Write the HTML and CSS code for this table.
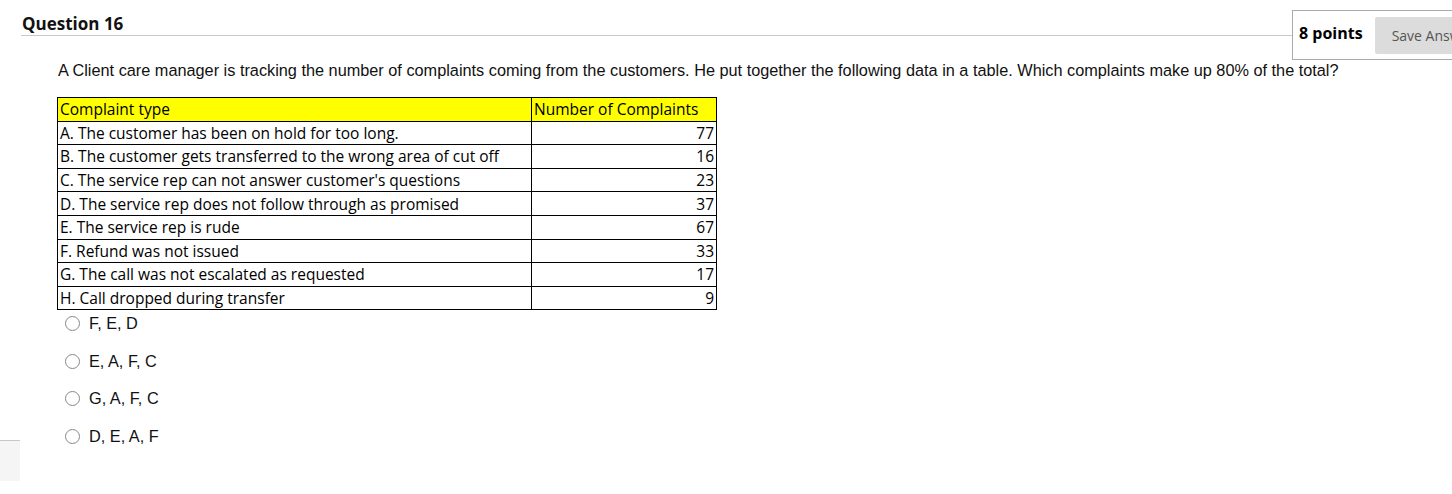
FILE: index.html
```html
<!DOCTYPE html>
<html>
<head>
<meta charset="utf-8">
<link rel="stylesheet" href="styles.css">
</head>
<body>
<div class="page">
  <div class="q-header">
    <h2 class="q-title">Question 16</h2>
    <div class="points-box">
      <span class="points">8 points</span>
      <button class="save-btn">Save Answer</button>
    </div>
  </div>
  <div class="q-body">
    <p class="q-text">A Client care manager is tracking the number of complaints coming from the customers. He put together the following data in a table. Which complaints make up 80% of the total?</p>
    <table class="data">
      <tr class="head"><td class="c1">Complaint type</td><td class="c2">Number of Complaints</td></tr>
      <tr><td class="c1">A. The customer has been on hold for too long.</td><td class="c2 num">77</td></tr>
      <tr><td class="c1">B. The customer gets transferred to the wrong area of cut off</td><td class="c2 num">16</td></tr>
      <tr><td class="c1">C. The service rep can not answer customer's questions</td><td class="c2 num">23</td></tr>
      <tr><td class="c1">D. The service rep does not follow through as promised</td><td class="c2 num">37</td></tr>
      <tr><td class="c1">E. The service rep is rude</td><td class="c2 num">67</td></tr>
      <tr><td class="c1">F. Refund was not issued</td><td class="c2 num">33</td></tr>
      <tr><td class="c1">G. The call was not escalated as requested</td><td class="c2 num">17</td></tr>
      <tr><td class="c1">H. Call dropped during transfer</td><td class="c2 num">9</td></tr>
    </table>
    <ul class="options">
      <li><span class="radio"></span><span class="opt">F, E, D</span></li>
      <li><span class="radio"></span><span class="opt">E, A, F, C</span></li>
      <li><span class="radio"></span><span class="opt">G, A, F, C</span></li>
      <li><span class="radio"></span><span class="opt">D, E, A, F</span></li>
    </ul>
  </div>
  <div class="side-box"></div>
</div>
</body>
</html>
```

FILE: styles.css
```css
html, body {
  margin: 0;
  padding: 0;
  background: #fff;
}
.page {
  position: relative;
  width: 1452px;
  height: 494px;
  overflow: hidden;
  font-family: "Liberation Sans", Arial, sans-serif;
  color: #111;
}
.q-header {
  display: flex;
  align-items: flex-start;
  padding: 10px 0 0 21px;
  margin-right: -60px;
}
.q-title {
  flex: 1;
  margin: 0;
  height: 25px;
  border-bottom: 1px solid #c8c8c8;
  font-family: "Open Sans", sans-serif;
  font-weight: 700;
  font-size: 17px;
  line-height: 28px;
  color: #111;
  padding-left: 1px;
  box-sizing: content-box;
}
.points-box {
  display: flex;
  align-items: center;
  height: 48px;
  border: 1px solid #aaa;
  border-right: none;
  padding-left: 6px;
  width: 213px;
  flex: none;
}
.points {
  font-family: "Open Sans", sans-serif;
  font-weight: 700;
  font-size: 16px;
  color: #000;
  margin-right: 12px;
  margin-top: -4px;
}
.save-btn {
  border: none;
  background: #dcdcdc;
  color: #555;
  font-family: "Open Sans", sans-serif;
  font-size: 14px;
  height: 37px;
  padding: 0 0 0 17px;
  width: 120px;
  text-align: left;
  border-radius: 2px;
  white-space: nowrap;
  overflow: hidden;
  margin-top: 1px;
}
.q-body {
  padding-left: 57px;
}
.q-text {
  margin: 0 0 0 1px;
  font-size: 16.3px;
  line-height: 20px;
  color: #111;
}
.data {
  border-collapse: collapse;
  margin-top: 17px;
  font-family: "Open Sans", sans-serif;
  font-size: 15.5px;
  color: #000;
}
.data td {
  border: 1px solid #000;
  height: 22.6px;
  padding: 0 2px;
  line-height: 22px;
  white-space: nowrap;
}
.data .c1 {
  width: 469px;
}
.data .c2 {
  width: 180px;
}
.data .num {
  text-align: right;
}
.data .head td {
  background: #ffff00;
}
.options {
  list-style: none;
  margin: 0;
  padding: 0 0 0 8px;
}
.options li {
  display: flex;
  align-items: center;
  height: 26px;
  margin-bottom: 11.7px;
}
.radio {
  width: 13px;
  height: 13px;
  border: 1.5px solid #888;
  border-radius: 50%;
  margin-right: 9px;
  flex: none;
}
.opt {
  font-size: 16.3px;
  color: #111;
}
.side-box {
  position: absolute;
  left: 0;
  top: 440px;
  width: 20px;
  height: 40px;
  background: #f5f5f5;
  border-top: 1px solid #c8c8c8;
}
```
